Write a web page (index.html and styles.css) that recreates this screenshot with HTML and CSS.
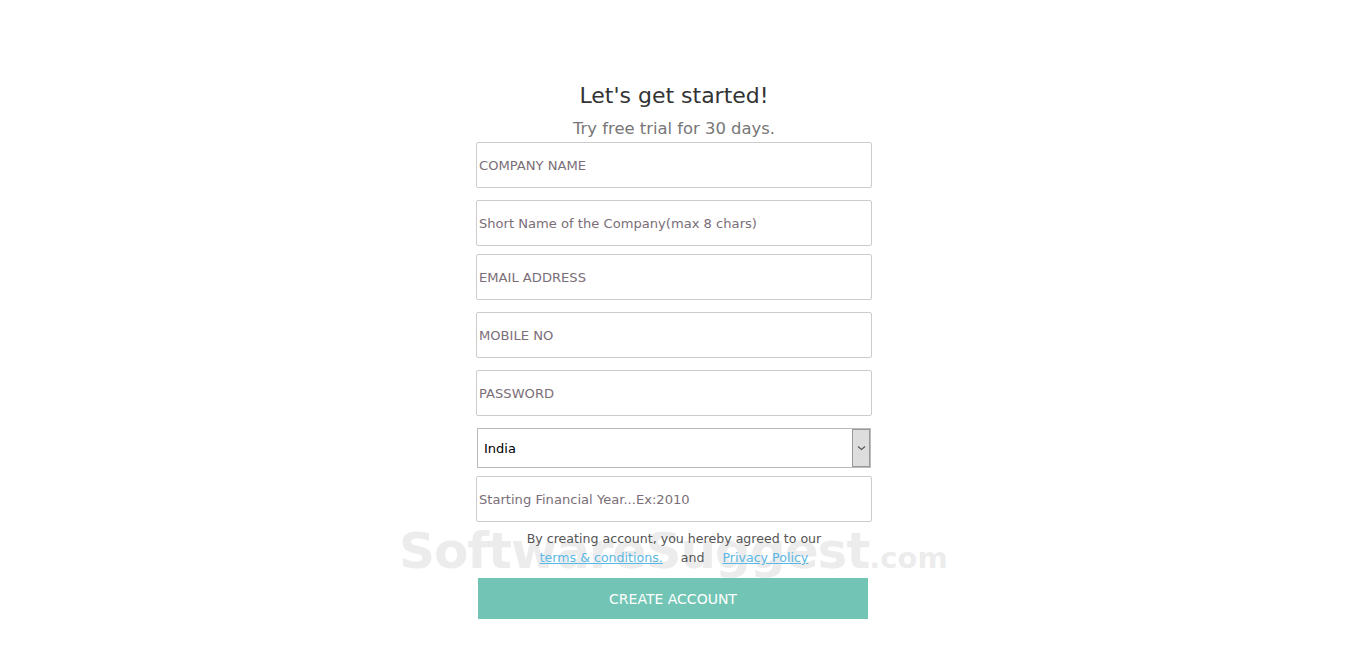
FILE: index.html
```html
<!DOCTYPE html>
<html lang="en">
<head>
<meta charset="UTF-8">
<meta name="viewport" content="width=device-width, initial-scale=1.0">
<title>Sign Up</title>
<link rel="stylesheet" href="styles.css">
</head>
<body>

<div class="signup">
    <div class="title">Let's get started!</div>
    <div class="subtitle">Try free trial for 30 days.</div>
    <form class="form">
        <input type="text" class="field" placeholder="COMPANY NAME">
        <input type="text" class="field gap-l" placeholder="Short Name of the Company(max 8 chars)">
        <input type="text" class="field gap-s" placeholder="EMAIL ADDRESS">
        <input type="text" class="field gap-l" placeholder="MOBILE NO">
        <input type="password" class="field gap-l" placeholder="PASSWORD">
        <div class="select gap-l">
            <span class="select-text">India</span>
            <span class="select-btn">
                <svg width="9" height="6" viewBox="0 0 9 6"><path d="M1 1.5 L4.5 4.5 L8 1.5" fill="none" stroke="#555" stroke-width="1.1"/></svg>
            </span>
        </div>
        <input type="text" class="field gap-s" placeholder="Starting Financial Year...Ex:2010">
        <div class="agree">
            By creating account, you hereby agreed to our<br>
            <a href="#">terms &amp; conditions.</a><span class="and">and</span><a href="#">Privacy Policy</a>
        </div>
        <button type="button" class="create">CREATE ACCOUNT</button>
        <div class="watermark">SoftwareSuggest<span class="dot">.com</span></div>
    </form>
</div>

</body>
</html>
```

FILE: styles.css
```css
body {
    margin: 0;
    background: #fff;
    font-family: "DejaVu Sans", Verdana, sans-serif;
}
.signup {
    width: 396px;
    margin-left: calc(50% - 197px);
    padding-top: 82px;
    text-align: center;
}
.title {
    font-size: 22px;
    color: #333;
    line-height: 28px;
}
.subtitle {
    font-size: 16.4px;
    color: #777;
    line-height: 20px;
    margin-top: 9px;
}
.form {
    position: relative;
    display: flex;
    flex-direction: column;
    align-items: center;
    margin-top: 3px;
}
.field {
    box-sizing: border-box;
    width: 396px;
    height: 46px;
    border: 1px solid #ccc;
    border-radius: 2px;
    padding: 0 2px;
    font-size: 13.1px;
    font-family: "DejaVu Sans", Verdana, sans-serif;
    color: #333;
    outline: none;
}
.field::placeholder {
    color: #7a6e78;
}
.gap-l { margin-top: 12px; }
.gap-s { margin-top: 8px; }
.select {
    box-sizing: border-box;
    width: 394px;
    height: 40px;
    border: 1px solid #bbb;
    display: flex;
    align-items: stretch;
    text-align: left;
}
.select-text {
    flex: 1;
    font-size: 13px;
    color: #000;
    padding-left: 6px;
    display: flex;
    align-items: center;
}
.select-btn {
    width: 16px;
    background: #ddd;
    border: 1px solid #999;
    display: flex;
    align-items: center;
    justify-content: center;
}
.agree {
    margin-top: 7px;
    font-size: 12.6px;
    line-height: 19px;
    color: #555;
    position: relative;
    z-index: 1;
}
.agree a {
    color: #5ab8e6;
}
.and {
    margin: 0 18px;
}
.create {
    align-self: flex-start;
    margin-top: 11px;
    margin-left: 2px;
    width: 390px;
    height: 41px;
    border: none;
    background: #72c5b4;
    color: #fff;
    font-size: 14px;
    font-family: "DejaVu Sans", Verdana, sans-serif;
    cursor: pointer;
}
.watermark {
    position: absolute;
    left: -77px;
    top: 380px;
    font-size: 50px;
    font-weight: bold;
    letter-spacing: -1px;
    color: rgba(200, 200, 200, 0.35);
    white-space: nowrap;
    pointer-events: none;
}
.watermark .dot {
    font-size: 29px;
    letter-spacing: 0;
}
```
